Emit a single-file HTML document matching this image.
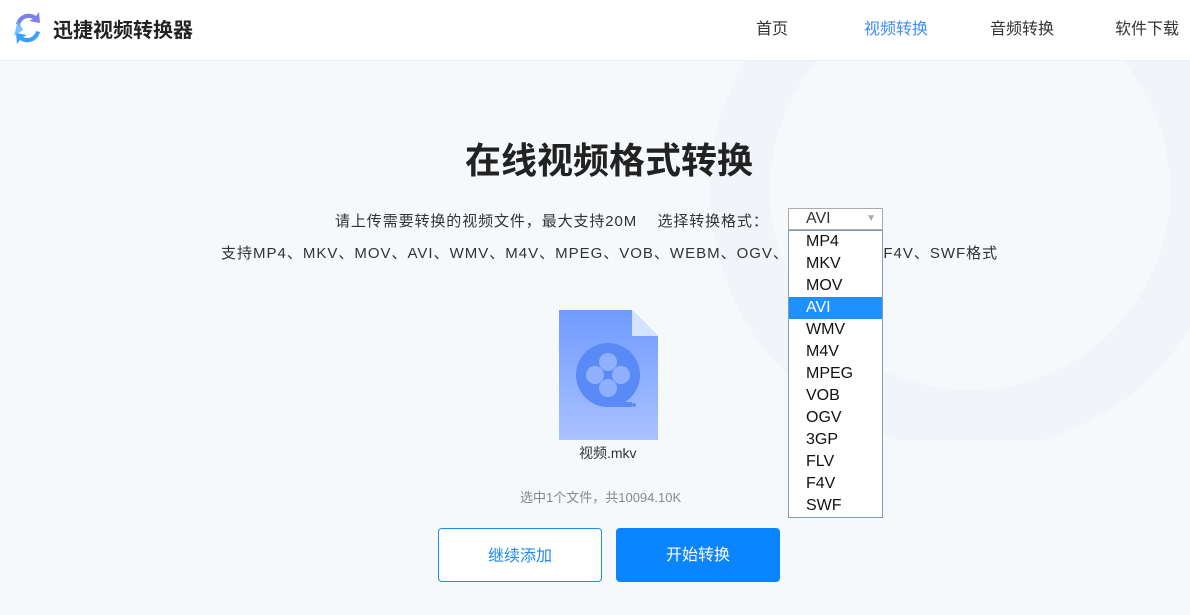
<!DOCTYPE html>
<html><head><meta charset="utf-8"><style>
*{margin:0;padding:0;box-sizing:border-box}
body{width:1190px;height:615px;overflow:hidden;background:#f5f9fc;font-family:"Liberation Sans","Noto Sans CJK SC",sans-serif;position:relative;color:#333}
.hdr{position:absolute;left:0;top:0;width:1190px;height:61px;background:#fff;border-bottom:1px solid #eceff3}
.logo{position:absolute;left:10px;top:10px}
.brand{position:absolute;left:53px;top:14px;font-size:20px;font-weight:bold;color:#222}
.nav{position:absolute;top:15px;font-size:16px;color:#333}
.a{position:absolute;white-space:nowrap}
.dd{position:absolute;left:788px;top:230px;width:95px;height:288px;background:#fff;border:1px solid #7f9db9}
.dd div{height:22px;line-height:22px;padding-left:17px;font-size:16px;color:#111}
.dd .s{background:#1e90ff;color:#fff}
.btn{position:absolute;top:528px;width:164px;height:54px;border-radius:4px;font-size:16px;text-align:center;line-height:56px}
</style></head><body>
<svg style="position:absolute;left:620px;top:40px" width="600" height="400"><circle cx="350" cy="150" r="230" fill="none" stroke="#f1f5f9" stroke-width="60"/></svg>
<div class="hdr">
<svg class="logo" width="36" height="36" viewBox="0 0 36 36"><path d="M6 14 A13 13 0 0 1 26 6 L29 2 L30 13 L19 11 L23 9 A9 9 0 0 0 10 15Z" fill="#7b7ff0"/><path d="M30 22 A13 13 0 0 1 10 30 L7 34 L6 23 L17 25 L13 27 A9 9 0 0 0 26 21Z" fill="#3aa0ff"/><path d="M8 10 L4 26 L13 20Z" fill="#5ab0ff" opacity=".8"/></svg>
<div class="brand">迅捷视频转换器</div>
<div class="nav" style="left:756px">首页</div>
<div class="nav" style="left:864px;color:#3b8cff">视频转换</div>
<div class="nav" style="left:990px">音频转换</div>
<div class="nav" style="left:1115px">软件下载</div>
</div>
<div class="a" style="left:465px;top:132px;font-size:36px;font-weight:bold;color:#222">在线视频格式转换</div>
<div class="a" style="left:335px;top:210px;font-size:15px;letter-spacing:0.9px">请上传需要转换的视频文件，最大支持20M &nbsp;&nbsp;&nbsp;选择转换格式：</div>
<div class="a" style="left:788px;top:208px;width:95px;height:22px;background:#fff;border:1px solid #aaa;font-size:16px;padding-left:17px;line-height:20px">AVI<span style="position:absolute;right:6px;top:0;color:#aaa;font-size:10px">▼</span></div>
<div class="a" style="left:221px;top:242px;font-size:15px;letter-spacing:1px">支持MP4、MKV、MOV、AVI、WMV、M4V、MPEG、VOB、WEBM、OGV、3GP、FLV、F4V、SWF格式</div>
<svg style="position:absolute;left:559px;top:310px" width="100" height="130"><defs><linearGradient id="g" x1="0" y1="0" x2="0" y2="1"><stop offset="0" stop-color="#6f9bff"/><stop offset="1" stop-color="#aac2ff"/></linearGradient></defs><path d="M0 0H73L99 26V130H0Z" fill="url(#g)"/><path d="M73 0L99 26H73Z" fill="#d5e2ff"/><circle cx="49" cy="65" r="32" fill="#5a8af5"/><circle cx="49" cy="52" r="9" fill="#8fb0ff"/><circle cx="49" cy="78" r="9" fill="#8fb0ff"/><circle cx="36" cy="65" r="9" fill="#8fb0ff"/><circle cx="62" cy="65" r="9" fill="#8fb0ff"/><rect x="49" y="92" width="24" height="5" fill="#5a8af5"/><circle cx="75" cy="95" r="2" fill="#5a8af5"/></svg>
<div class="a" style="left:579px;top:443px;font-size:14px">视频.mkv</div>
<div class="a" style="left:520px;top:487px;font-size:13px;color:#888">选中1个文件，共10094.10K</div>
<div class="btn" style="left:438px;background:#fff;border:1px solid #1e88ff;color:#1e88ff">继续添加</div>
<div class="btn" style="left:616px;background:#0a84ff;color:#fff">开始转换</div>
<div class="dd"><div>MP4</div><div>MKV</div><div>MOV</div><div class="s">AVI</div><div>WMV</div><div>M4V</div><div>MPEG</div><div>VOB</div><div>OGV</div><div>3GP</div><div>FLV</div><div>F4V</div><div>SWF</div></div>
</body></html>
